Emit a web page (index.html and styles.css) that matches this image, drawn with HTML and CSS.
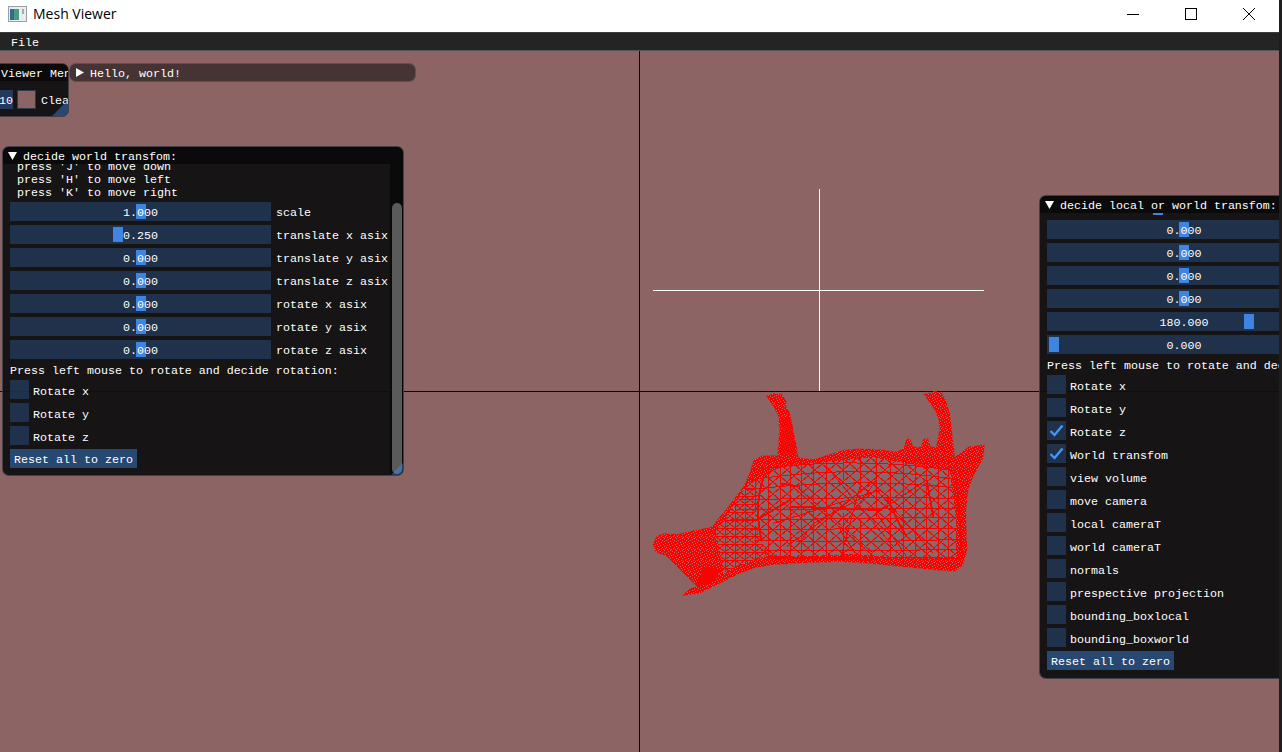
FILE: index.html
```html
<!DOCTYPE html>
<html lang="en">
<head>
  <meta charset="UTF-8">
  <title>Mesh Viewer</title>
  <link rel="stylesheet" href="styles.css">
</head>
<body>
<header class="titlebar">
  <svg class="app-icon" width="20" height="16" viewBox="0 0 20 16">
    <rect x="0.5" y="0.5" width="18" height="15" fill="#e8eef0" stroke="#9aa0a4"/>
    <rect x="2" y="3" width="9" height="11" fill="#4a9a86"/>
    <rect x="2" y="3" width="4" height="11" fill="#2f6f8a"/>
    <rect x="14" y="3" width="2" height="5" fill="#9ab0b4"/>
  </svg>
  <span class="app-name">Mesh Viewer</span>
  <div class="win-buttons">
    <svg width="12" height="12" viewBox="0 0 12 12"><path d="M0 6.5H12" stroke="#000" fill="none"/></svg>
    <svg width="12" height="12" viewBox="0 0 12 12"><rect x="0.5" y="0.5" width="11" height="11" stroke="#000" fill="none"/></svg>
    <svg width="12" height="12" viewBox="0 0 12 12"><path d="M0 0L12 12M12 0L0 12" stroke="#000" fill="none"/></svg>
  </div>
</header>
<nav class="menubar"><span>File</span></nav>

<main class="canvas">
  <div class="axis axis-v"></div>
  <div class="axis axis-h"></div>
  <div class="cross cross-v"></div>
  <div class="cross cross-h"></div>

  <svg class="mesh" width="360" height="230" viewBox="0 0 1080 690" shape-rendering="crispEdges">
    <defs>
      <path id="outline" d="M378 48L400 40L425 42L438 60L438 78L450 100L460 150L472 205L475 232L520 238L560 225L610 210L660 205L720 208L770 215L790 205L800 175L812 178L820 200L843 200L850 176L865 175L872 200L888 200L898 150L895 115L880 85L850 42L885 35L905 38L918 60L930 100L938 170L945 230L985 200L1035 193L1030 235L1000 290L985 330L978 400L982 510L970 555L945 575L900 572L800 562L700 552L600 545L480 550L400 555L340 565L290 585L230 615L180 640L125 648L150 625L170 620L150 600L80 530L45 515L38 490L50 468L70 460L110 462L215 440L260 385L310 320L330 275L340 240L370 225L412 225L418 150L415 110L400 80Z"/>
      <clipPath id="mesh-clip"><use href="#outline"/></clipPath>
      <pattern id="specks" width="36" height="36" patternUnits="userSpaceOnUse">
        <rect width="36" height="36" fill="#f00"/>
        <path d="M3 0h3v3h-3zM15 0h3v3h-3zM27 0h3v3h-3zM9 3h3v3h-3zM21 3h3v3h-3zM33 3h3v3h-3zM0 6h3v3h-3zM18 6h3v3h-3zM12 9h3v3h-3zM24 9h3v3h-3zM6 12h3v3h-3zM30 12h3v3h-3zM0 15h3v3h-3zM18 15h3v3h-3zM12 18h3v3h-3zM27 18h3v3h-3zM3 21h3v3h-3zM21 21h3v3h-3zM15 24h3v3h-3zM33 24h3v3h-3zM9 27h3v3h-3zM24 27h3v3h-3zM0 30h3v3h-3zM18 30h3v3h-3zM6 33h3v3h-3zM30 33h3v3h-3z" fill="#a87070"/>
      </pattern>
      <pattern id="fine" width="30" height="24" patternUnits="userSpaceOnUse">
        <rect width="30" height="24" fill="#85696b"/>
        <path d="M0 0L30 24M30 0L0 24M0 12H30M15 0V24" stroke="#f00" stroke-width="3" fill="none"/>
      </pattern>
      <pattern id="diag" width="84" height="72" patternUnits="userSpaceOnUse">
        <path d="M0 0L84 72M84 0L0 72M42 0L84 36M0 36L42 0M0 36L42 72M42 72L84 36" stroke="#f00" stroke-width="3" fill="none"/>
      </pattern>
    </defs>
    <use href="#outline" fill="url(#specks)" stroke="#a35050" stroke-width="2"/>
    <g clip-path="url(#mesh-clip)">
      <!-- finer cells towards the tip -->
      <path d="M225 460L275 385L325 310L350 300L385 525L300 555L250 580L240 520Z" fill="url(#fine)"/>
      <!-- open middle of the mesh -->
      <path d="M350 300L420 262L560 245L700 232L800 250L930 270L948 420L948 530L800 535L640 522L470 530L385 525L345 440Z" fill="#85696b"/>
      <path d="M350 300L420 262L560 245L700 232L800 250L930 270L948 420L948 530L800 535L640 522L470 530L385 525L345 440Z" fill="url(#diag)"/>
      <g stroke="#f00" stroke-width="3" fill="none">
        <path d="M385 240V550M420 240V550M450 240V550M485 240V550M520 240V550M560 240V550M610 230V300M610 400V550M660 230V330M660 420V550M710 230V410M750 230V550M790 230V550M825 230V550M860 230V550M895 230V550M925 230V560"/>
        <path d="M340 270Q650 225 960 275M330 300Q650 250 960 300M320 330Q650 290 960 325M300 360Q650 350 960 355M290 390Q650 385 960 385M270 420Q650 415 960 412M330 450Q650 445 960 445M340 480Q650 490 960 478M360 510Q650 515 960 508M380 535Q650 530 960 535"/>
        <path d="M710 300L600 450L640 510M710 330L520 430L470 500M710 330L880 520M710 400L800 530M710 400L860 300M560 260L760 500M470 320L700 520M660 320L600 540M440 500L710 300M400 430L720 330"/>
      </g>
      <g stroke="#f00" stroke-width="6" fill="none">
        <path d="M372 290Q340 380 365 480M950 300Q960 430 965 520M420 310L480 320M450 380L720 390M740 350Q770 420 800 470M380 530L700 540M350 420L450 360M860 300L880 410"/>
      </g>
      <path d="M190 560L240 570L215 610L170 620Z" fill="#f00"/>
      <path d="M428 110L455 110L468 225L420 225Z" fill="#f00" opacity=".6"/>
    </g>
  </svg>

  <section class="win viewer-menu">
    <div class="win-title"><span>Viewer Menu</span></div>
    <div class="viewer-row">
      <span class="frame num">10</span>
      <span class="swatch"></span>
      <span class="clear-label">Clear</span>
    </div>
    <span class="grip"></span>
  </section>

  <section class="win hello">
    <svg class="arrow" width="8" height="9" viewBox="0 0 8 9"><path d="M0 0L8 4.5L0 9Z" fill="#fff"/></svg>
    <span>Hello, world!</span>
  </section>

  <section class="win world">
    <div class="win-title">
      <svg class="arrow" width="9" height="8" viewBox="0 0 9 8"><path d="M0 0H9L4.5 8Z" fill="#fff"/></svg>
      <span>decide world transfom:</span>
    </div>
    <div class="win-body">
      <div class="scroller">
        <div class="help">
          <div>press 'J' to move down</div>
          <div>press 'H' to move left</div>
          <div>press 'K' to move right</div>
        </div>
        <div class="row"><div class="slider"><span class="grab at-mid"></span><span class="val">1.000</span></div><label>scale</label></div>
        <div class="row"><div class="slider"><span class="grab at-quarter"></span><span class="val">0.250</span></div><label>translate x asix</label></div>
        <div class="row"><div class="slider"><span class="grab at-mid"></span><span class="val">0.000</span></div><label>translate y asix</label></div>
        <div class="row"><div class="slider"><span class="grab at-mid"></span><span class="val">0.000</span></div><label>translate z asix</label></div>
        <div class="row"><div class="slider"><span class="grab at-mid"></span><span class="val">0.000</span></div><label>rotate x asix</label></div>
        <div class="row"><div class="slider"><span class="grab at-mid"></span><span class="val">0.000</span></div><label>rotate y asix</label></div>
        <div class="row"><div class="slider"><span class="grab at-mid"></span><span class="val">0.000</span></div><label>rotate z asix</label></div>
        <p class="note">Press left mouse to rotate and decide rotation:</p>
        <div class="check"><span class="box"></span><label>Rotate x</label></div>
        <div class="check"><span class="box"></span><label>Rotate y</label></div>
        <div class="check"><span class="box"></span><label>Rotate z</label></div>
        <button class="reset">Reset all to zero</button>
      </div>
      <div class="scrollbar"><span class="thumb"></span></div>
    </div>
    <span class="grip"></span>
  </section>

  <section class="win local">
    <div class="win-title">
      <svg class="arrow" width="9" height="8" viewBox="0 0 9 8"><path d="M0 0H9L4.5 8Z" fill="#fff"/></svg>
      <span>decide local or world transfom:</span>
    </div>
    <div class="win-body">
      <div class="scroller">
        <span class="cut-grab"></span>
        <div class="row"><div class="slider"><span class="grab at-mid"></span><span class="val">0.000</span></div></div>
        <div class="row"><div class="slider"><span class="grab at-mid"></span><span class="val">0.000</span></div></div>
        <div class="row"><div class="slider"><span class="grab at-mid"></span><span class="val">0.000</span></div></div>
        <div class="row"><div class="slider"><span class="grab at-mid"></span><span class="val">0.000</span></div></div>
        <div class="row"><div class="slider"><span class="grab at-far"></span><span class="val">180.000</span></div></div>
        <div class="row"><div class="slider"><span class="grab at-min"></span><span class="val">0.000</span></div></div>
        <p class="note">Press left mouse to rotate and decide rotation:</p>
        <div class="check"><span class="box"></span><label>Rotate x</label></div>
        <div class="check"><span class="box"></span><label>Rotate y</label></div>
        <div class="check"><span class="box"><svg width="19" height="19" viewBox="0 0 19 19"><path d="M3.5 10L7.5 14L15.5 4.5" stroke="#4296fa" stroke-width="2.4" fill="none"/></svg></span><label>Rotate z</label></div>
        <div class="check"><span class="box"><svg width="19" height="19" viewBox="0 0 19 19"><path d="M3.5 10L7.5 14L15.5 4.5" stroke="#4296fa" stroke-width="2.4" fill="none"/></svg></span><label>World transfom</label></div>
        <div class="check"><span class="box"></span><label>view volume</label></div>
        <div class="check"><span class="box"></span><label>move camera</label></div>
        <div class="check"><span class="box"></span><label>local cameraT</label></div>
        <div class="check"><span class="box"></span><label>world cameraT</label></div>
        <div class="check"><span class="box"></span><label>normals</label></div>
        <div class="check"><span class="box"></span><label>prespective projection</label></div>
        <div class="check"><span class="box"></span><label>bounding_boxlocal</label></div>
        <div class="check"><span class="box"></span><label>bounding_boxworld</label></div>
        <button class="reset">Reset all to zero</button>
      </div>
    </div>
  </section>
</main>
</body>
</html>
```
FILE: styles.css
```css
html,
body {
  width: 100%;
  height: 100%;
}
body {
  margin: 0;
  padding-right: 3px;
  box-sizing: border-box;
  overflow: hidden;
  display: flex;
  flex-direction: column;
  background: #1e1e1e;
  color: #fff;
  font-family: "Liberation Mono", "DejaVu Sans Mono", monospace;
  font-size: 11.67px;
  line-height: 13px;
}

/* window chrome */
.titlebar {
  height: 32px;
  flex: none;
  box-sizing: border-box;
  display: flex;
  align-items: center;
  padding: 0 0 5px 8px;
  background: #fff;
  color: #000;
  font-family: "Open Sans", "Liberation Sans", sans-serif;
  font-size: 14px;
}
.app-icon {
  margin-right: 5px;
}
.win-buttons {
  margin-left: auto;
  display: flex;
  gap: 46px;
  padding-right: 24px;
}
.menubar {
  flex: none;
  padding-left: 11px;
  padding-top: 3px;
  box-sizing: border-box;
  height: 19px;
  display: flex;
  align-items: center;
  background: #242424;
  border-top: 1px solid #3c3c3c;
  border-bottom: 1px solid #555;
}

/* free canvas: viewport, axes and floating panels */
.canvas {
  position: relative;
  flex: 1;
  overflow: hidden;
  background: #8c6464;
}
.axis,
.cross {
  position: absolute;
}
.axis {
  background: #000;
}
.axis-v {
  left: 639px;
  top: 0;
  bottom: 0;
  width: 1px;
}
.axis-h {
  left: 0;
  right: 0;
  top: 340px;
  height: 1px;
}
.cross {
  background: #fff;
}
.cross-v {
  left: 819px;
  top: 138px;
  width: 1px;
  height: 202px;
}
.cross-h {
  left: 653px;
  top: 239px;
  width: 331px;
  height: 1px;
}
.mesh {
  position: absolute;
  left: 640px;
  top: 329px;
}

/* floating panels */
.win {
  position: absolute;
  box-sizing: border-box;
  background: rgba(15, 15, 15, 0.94);
  border: 1px solid rgba(110, 110, 128, 0.5);
  border-radius: 7px;
  overflow: hidden;
}
.win-title {
  height: 17px;
  display: flex;
  align-items: center;
  background: #0a0a0a;
  white-space: nowrap;
  overflow: hidden;
}
.win-title span {
  padding-top: 3px;
}
.arrow {
  flex: none;
}
.win-title .arrow {
  margin-left: 5px;
  margin-right: 6px;
}
.win-body {
  display: flex;
}
.grip {
  position: absolute;
  right: 0;
  bottom: 0;
  width: 12px;
  height: 12px;
  background: rgba(66, 150, 250, 0.4);
  clip-path: polygon(100% 0, 100% 100%, 0 100%);
}

.viewer-menu {
  left: -8px;
  top: 12px;
  width: 77px;
  height: 54px;
}
.viewer-menu .win-title {
  padding-left: 8px;
}
.viewer-menu .grip {
  width: 16px;
  height: 16px;
}
.viewer-row {
  display: flex;
  align-items: center;
  padding-top: 9px;
  white-space: nowrap;
}
.frame.num {
  width: 20px;
  height: 19px;
  flex: none;
  box-sizing: border-box;
  padding-left: 6px;
  line-height: 23px;
  background: rgba(41, 74, 122, 0.7);
}
.swatch {
  width: 19px;
  height: 19px;
  flex: none;
  margin-left: 4px;
  background: #8c6464;
  border: 1px solid #2c3a50;
  box-sizing: border-box;
}
.clear-label {
  margin-left: 5px;
  padding-top: 3px;
}

.hello {
  left: 69px;
  top: 12px;
  width: 347px;
  height: 19px;
  display: flex;
  align-items: center;
  gap: 6px;
  padding-left: 6px;
  background: #463434;
}
.hello span {
  padding-top: 3px;
}

.world {
  left: 2px;
  top: 95px;
  width: 402px;
  height: 330px;
}
.world .scroller {
  width: 387px;
  height: 312px;
  padding-left: 7px;
  overflow: hidden;
  box-sizing: border-box;
}
.help {
  margin-top: -3px;
  padding-left: 7px;
  margin-bottom: 2px;
}
.scrollbar {
  width: 13px;
  background: #0a0a0a;
  padding: 39px 1px 2px 2px;
  box-sizing: border-box;
  height: 312px;
}
.thumb {
  display: block;
  height: 100%;
  background: #5a5a5a;
  border-radius: 5px;
}

.local {
  left: 1039px;
  top: 144px;
  width: 260px;
  height: 484px;
}
.local .scroller {
  padding: 7px 0 0 7px;
  position: relative;
}
.local .row {
  width: 274px;
}
.cut-grab {
  position: absolute;
  left: 113px;
  top: 0;
  width: 10px;
  height: 2px;
  background: #3d85e0;
}

/* imgui-style widgets */
.row {
  display: flex;
  align-items: center;
  gap: 5px;
  margin-bottom: 4px;
  height: 19px;
  white-space: nowrap;
}
.row label {
  padding-top: 3px;
}
.check label {
  padding-top: 5px;
}
.slider {
  position: relative;
  width: 261px;
  height: 19px;
  flex: none;
  background: rgba(41, 74, 122, 0.54);
  text-align: center;
  line-height: 23px;
}
.local .slider {
  width: 274px;
}
.val {
  position: relative;
}
.grab {
  position: absolute;
  top: 2px;
  bottom: 2px;
  width: 10px;
  background: #3d85e0;
}
.at-mid {
  left: calc(50% - 5px);
}
.at-quarter {
  left: 103px;
}
.at-far {
  left: 197px;
}
.at-min {
  left: 2px;
}
.note {
  margin: 0 0 2px;
  padding-top: 2px;
  white-space: nowrap;
}
.check {
  display: flex;
  align-items: center;
  gap: 4px;
  height: 19px;
  margin-bottom: 4px;
  white-space: nowrap;
}
.box {
  width: 19px;
  height: 19px;
  flex: none;
  background: rgba(41, 74, 122, 0.54);
}
.box svg {
  display: block;
}
.reset {
  display: block;
  height: 19px;
  width: 127px;
  padding: 3px 0 0;
  border: 0;
  background: rgba(66, 150, 250, 0.4);
  color: #fff;
  font: inherit;
  text-align: center;
}
```
